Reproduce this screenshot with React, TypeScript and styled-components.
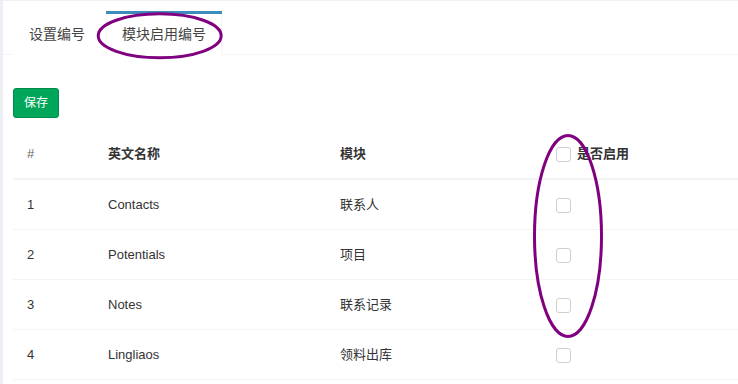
import React from "react";
import styled, { createGlobalStyle } from "styled-components";

const GlobalStyle = createGlobalStyle`
  html, body {
    margin: 0;
    padding: 0;
    background: #ecf0f5;
    font-family: "Liberation Sans", "Noto Sans CJK SC", sans-serif;
    color: #333;
  }
`;

const Page = styled.div`
  position: relative;
  width: 738px;
  height: 384px;
  overflow: hidden;
`;

const Box = styled.div`
  margin-left: 3px;
  background: #fff;
  height: 383px;
  border-top: 1px solid #f0f0f0;
`;

const TabList = styled.ul`
  display: flex;
  margin: 0;
  padding: 10px 0 0 10px;
  list-style: none;
  border-bottom: 1px solid #f4f4f4;
`;

const TabItem = styled.li<{ $active?: boolean }>`
  margin-right: 5px;
  margin-bottom: -1px;
  border-top: 3px solid ${(p) => (p.$active ? "#3c8dbc" : "transparent")};
`;

const TabLink = styled.a<{ $active?: boolean }>`
  display: block;
  padding: 10px 15px;
  line-height: 20px;
  font-size: 14px;
  color: #444;
  background: #fff;
  border-left: 1px solid ${(p) => (p.$active ? "#f4f4f4" : "transparent")};
  border-right: 1px solid ${(p) => (p.$active ? "#f4f4f4" : "transparent")};
  border-bottom: 1px solid ${(p) => (p.$active ? "#fff" : "transparent")};
  text-decoration: none;
  cursor: pointer;
`;

const TabContent = styled.div`
  padding: 33px 0 0 10px;
`;

const SaveButton = styled.button`
  display: block;
  padding: 5px 10px;
  font-family: inherit;
  font-size: 12px;
  line-height: 18px;
  color: #fff;
  background: #00a65a;
  border: 1px solid #008d4c;
  border-radius: 3px;
  cursor: pointer;
`;

const Table = styled.table`
  margin-top: 12px;
  width: 100%;
  table-layout: fixed;
  border-collapse: separate;
  border-spacing: 0;
  font-size: 13px;
`;

const HeadCell = styled.th<{ $muted?: boolean }>`
  padding: 14px 14px;
  line-height: 20px;
  text-align: left;
  font-weight: ${(p) => (p.$muted ? "normal" : "bold")};
  color: ${(p) => (p.$muted ? "#666" : "#333")};
  border-bottom: 2px solid #f4f4f4;
`;

const Cell = styled.td`
  padding: 15px 14px 14px;
  line-height: 20px;
  color: #333;
  border-bottom: 1px solid #f4f4f4;
`;

const CheckWrap = styled.div`
  display: flex;
  align-items: center;
  gap: 6px;
  height: 20px;
`;

const Check = styled.input`
  appearance: none;
  margin: 0;
  width: 15px;
  height: 15px;
  border: 1px solid #cfcfcf;
  border-radius: 3px;
  background: #fff;
`;

const Overlay = styled.svg`
  position: absolute;
  left: 0;
  top: 0;
  pointer-events: none;
`;

const rows = [
  { id: 1, name: "Contacts", module: "联系人" },
  { id: 2, name: "Potentials", module: "项目" },
  { id: 3, name: "Notes", module: "联系记录" },
  { id: 4, name: "Lingliaos", module: "领料出库" },
];

export default function App() {
  return (
    <Page>
      <GlobalStyle />
      <Box>
        <TabList>
          <TabItem>
            <TabLink>设置编号</TabLink>
          </TabItem>
          <TabItem $active>
            <TabLink $active>模块启用编号</TabLink>
          </TabItem>
        </TabList>
        <TabContent>
          <SaveButton>保存</SaveButton>
          <Table>
            <colgroup>
              <col style={{ width: 81 }} />
              <col style={{ width: 232 }} />
              <col style={{ width: 216 }} />
              <col />
            </colgroup>
            <thead>
              <tr>
                <HeadCell $muted>#</HeadCell>
                <HeadCell>英文名称</HeadCell>
                <HeadCell>模块</HeadCell>
                <HeadCell>
                  <CheckWrap>
                    <Check type="checkbox" />
                    <span>是否启用</span>
                  </CheckWrap>
                </HeadCell>
              </tr>
            </thead>
            <tbody>
              {rows.map((r) => (
                <tr key={r.id}>
                  <Cell>{r.id}</Cell>
                  <Cell>{r.name}</Cell>
                  <Cell>{r.module}</Cell>
                  <Cell>
                    <CheckWrap>
                      <Check type="checkbox" />
                    </CheckWrap>
                  </Cell>
                </tr>
              ))}
            </tbody>
          </Table>
        </TabContent>
      </Box>
      <Overlay width="738" height="384" viewBox="0 0 738 384">
        <ellipse cx="159.7" cy="35.8" rx="61.5" ry="22" fill="none" stroke="#800080" strokeWidth="3" />
        <ellipse cx="568" cy="236" rx="33.5" ry="100.5" fill="none" stroke="#800080" strokeWidth="3" />
      </Overlay>
    </Page>
  );
}
